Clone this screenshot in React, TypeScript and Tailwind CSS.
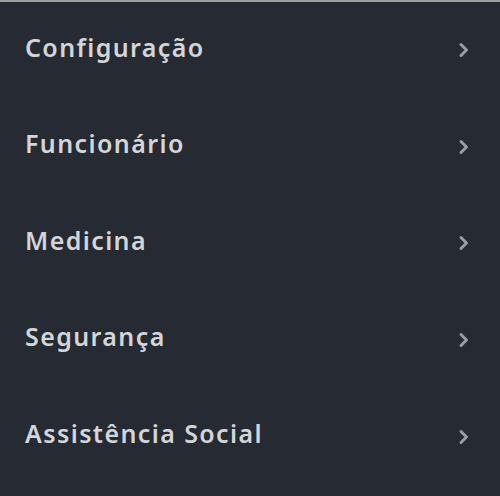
import React from "react";

const items = ["Configuração", "Funcionário", "Medicina", "Segurança", "Assistência Social"];

function Chevron() {
  return (
    <svg width="14" height="18" viewBox="0 0 14 18" className="mt-[6px] text-[#9a9da3]">
      <path d="M4 3.5l5.5 5.5-5.5 5.5" fill="none" stroke="currentColor" strokeWidth="3" strokeLinecap="round" strokeLinejoin="round" />
    </svg>
  );
}

export default function App() {
  return (
    <main className="w-[500px] h-[496px] bg-[#252a33] border-t-2 border-[#a0a0a0] overflow-hidden">
      <ul>
        {items.map((label) => (
          <li key={label} className="h-[96.6px] flex items-center justify-between pl-[25px] pr-[29px] pb-[6px]">
            <span
              className="text-[25px] font-semibold tracking-[1.4px] text-[#d3d5d8]"
              style={{ fontFamily: '"Noto Sans", "Open Sans", sans-serif' }}
            >
              {label}
            </span>
            <Chevron />
          </li>
        ))}
      </ul>
    </main>
  );
}
